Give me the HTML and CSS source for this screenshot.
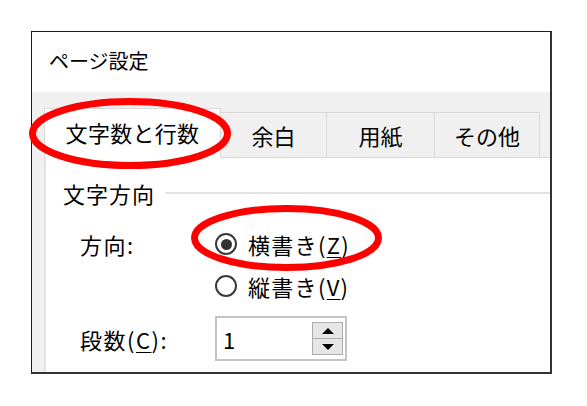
FILE: index.html
```html
<!DOCTYPE html>
<html lang="ja">
<head>
<meta charset="utf-8">
<title>ページ設定</title>
<link rel="stylesheet" href="styles.css">
</head>
<body>
<div class="frame">
  <div class="title">ページ設定</div>
  <div class="body">
    <div class="tabs">
      <div class="tab active">文字数と行数</div>
      <div class="tab w-margin">余白</div>
      <div class="tab w-paper">用紙</div>
      <div class="tab w-other">その他</div>
    </div>
    <div class="panel">
      <div class="group-head"><span class="group-title">文字方向</span><span class="rule"></span></div>
      <div class="dir-row">
        <span class="label">方向:</span>
        <div class="radios">
          <div class="radio"><span class="dot checked"></span><span class="rtext">横書き(<u>Z</u>)</span></div>
          <div class="radio"><span class="dot"></span><span class="rtext">縦書き(<u>V</u>)</span></div>
        </div>
      </div>
      <div class="cols-row">
        <span class="label">段数(<u>C</u>):</span>
        <div class="spin">
          <span class="val">1</span>
          <div class="btns">
            <span class="btn"><span class="arrow-up"></span></span>
            <span class="btn"><span class="arrow-down"></span></span>
          </div>
        </div>
      </div>
    </div>
  </div>
</div>
<svg class="marks" width="587" height="406" viewBox="0 0 587 406">
  <ellipse cx="130" cy="133.5" rx="97.5" ry="32" fill="none" stroke="#ff0000" stroke-width="7"/>
  <ellipse cx="286.5" cy="238" rx="92" ry="29.5" fill="none" stroke="#ff0000" stroke-width="7"/>
</svg>
</body>
</html>
```
FILE: styles.css
```css
* { box-sizing: border-box; }
html, body {
  margin: 0;
  padding: 0;
  background: #ffffff;
}
body {
  width: 587px;
  height: 406px;
  position: relative;
  overflow: hidden;
  font-family: "Noto Sans CJK JP", "Noto Sans", sans-serif;
  color: #000;
}
.frame {
  margin: 31px 0 0 31px;
  width: 521px;
  height: 343px;
  border: 1px solid #1c1c1c;
  border-right: 2px solid #333;
  border-bottom: 2px solid #333;
  overflow: hidden;
  display: flex;
  flex-direction: column;
}
.title {
  height: 60px;
  flex: none;
  padding-left: 17px;
  line-height: 58px;
  font-size: 20px;
  background: #fff;
}
.body {
  flex: 1;
  background: #f0f0f0;
  padding: 16px 0 0 12px;
  display: flex;
  flex-direction: column;
}
.tabs {
  display: flex;
  align-items: flex-end;
  height: 49px;
  flex: none;
}
.tab {
  height: 45px;
  border-top: 1px solid #d9d9d9;
  border-right: 1px solid #d9d9d9;
  background: #f0f0f0;
  font-size: 22px;
  display: flex;
  align-items: center;
  justify-content: center;
  padding-bottom: 1px;
}
.tab.active {
  width: 177px;
  height: 50px;
  margin-bottom: -1px;
  border-left: 1px solid #d9d9d9;
  background: #ffffff;
  position: relative;
  z-index: 1;
  padding-bottom: 4px;
  letter-spacing: 0.3px;
}
.w-margin { width: 106px; }
.w-paper { width: 108px; }
.w-other { width: 105px; }
.panel {
  flex: 1;
  background: #ffffff;
  border-top: 1px solid #d9d9d9;
  border-left: 2px solid #e3e3e3;
  padding-left: 17px;
}
.group-head {
  margin-top: 20px;
  height: 30px;
  display: flex;
  align-items: center;
  font-size: 22px;
}
.group-title {
  letter-spacing: 1px;
}
.rule {
  flex: 1;
  height: 2px;
  background: #e3e3e3;
  margin-left: 10px;
}
.dir-row {
  margin-top: 15px;
  display: grid;
  grid-template-columns: 135px 1fr;
  padding-left: 17px;
  font-size: 22px;
}
.label {
  line-height: 42px;
  font-size: 22px;
  letter-spacing: 1.5px;
}
.radio {
  height: 42px;
  display: flex;
  align-items: center;
}
.rtext {
  letter-spacing: 1.3px;
}
.dot {
  width: 22px;
  height: 22px;
  border: 2px solid #3a3a3a;
  border-radius: 50%;
  margin-right: 11px;
  display: flex;
  align-items: center;
  justify-content: center;
  flex: none;
}
.dot.checked::after {
  content: "";
  width: 11px;
  height: 11px;
  border-radius: 50%;
  background: #333;
}
.cols-row {
  margin-top: 9px;
  padding-left: 17px;
  display: grid;
  grid-template-columns: 135px 132px;
  align-items: center;
}
.spin {
  height: 45px;
  border: 2px solid #c4c4c4;
  display: flex;
  align-items: center;
  justify-content: space-between;
  padding-left: 6px;
  padding-right: 2px;
}
.val {
  font-size: 22px;
}
.btns {
  display: flex;
  flex-direction: column;
  width: 31px;
}
.btn {
  height: 17px;
  background: #e6e6e6;
  border: 1px solid #adadad;
  display: flex;
  align-items: center;
  justify-content: center;
}
.btn + .btn { margin-top: -1px; }
.arrow-up {
  width: 0; height: 0;
  border-left: 6px solid transparent;
  border-right: 6px solid transparent;
  border-bottom: 6px solid #000;
}
.arrow-down {
  width: 0; height: 0;
  border-left: 6px solid transparent;
  border-right: 6px solid transparent;
  border-top: 6px solid #000;
}
u {
  text-decoration-thickness: 1px;
  text-underline-offset: 3px;
}
.marks {
  position: absolute;
  left: 0;
  top: 0;
  z-index: 2;
  pointer-events: none;
}
```
